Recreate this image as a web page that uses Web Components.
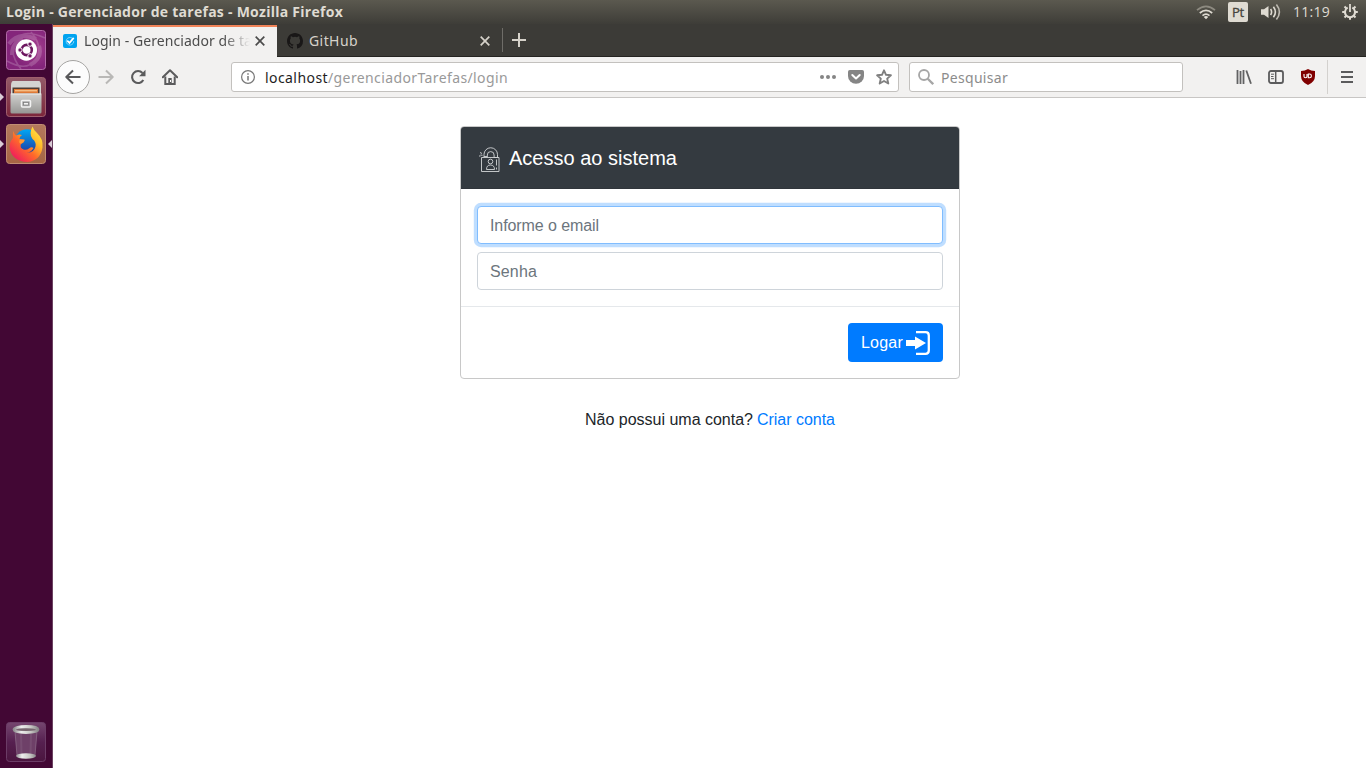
<!DOCTYPE html>
<html lang="pt-BR">
<head>
<meta charset="utf-8">
<title>Login - Gerenciador de tarefas</title>
<style>
html,body{margin:0;width:1366px;height:768px;overflow:hidden;background:#fff}
</style>
</head>
<body>
<desktop-shell></desktop-shell>
<script>
function define(name, html, setup) {
  const t = document.createElement('template');
  t.innerHTML = html;
  customElements.define(name, class extends HTMLElement {
    connectedCallback() {
      if (this.shadowRoot) return;
      this.attachShadow({mode: 'open'}).appendChild(t.content.cloneNode(true));
      if (setup) setup(this, this.shadowRoot);
    }
  });
}

/* Text label whose letter spacing is tuned to give a fixed advance width */
define('ui-label', `<style>:host{display:block;flex:none;white-space:nowrap}span{display:inline-block;white-space:pre}</style><span></span>`, (host, root) => {
  const s = root.querySelector('span');
  s.textContent = host.getAttribute('text');
  const w = +host.getAttribute('w');
  const fit = () => {
    s.style.letterSpacing = '0';
    const n = s.getBoundingClientRect().width;
    if (n) s.style.letterSpacing = ((w - n) / s.textContent.length) + 'px';
  };
  host.style.width = w + 'px';
  fit();
  requestAnimationFrame(fit);
});

const icons = {
wifi:['0 0 20 16','<g fill="none" stroke-width="1.7"><path d="M1 6.2Q10-1.6 19 6.2" stroke="#8d8a80"/><path d="M3.8 9Q10 3.6 16.2 9" stroke="#dfdbd2"/><path d="M6.5 11.6Q10 8.6 13.5 11.6" stroke="#dfdbd2"/></g><path d="M10 15.2l-2.2-2.3q2.2-1.6 4.4 0z" fill="#dfdbd2"/>'],
sound:['0 0 20 18','<path d="M0 6.3h3L7.5 3v12L3 11.7H0z" fill="#dfdbd2"/><g fill="none" stroke="#dfdbd2" stroke-width="1.6"><path d="M9.6 6q2 3 0 6"/><path d="M12.4 3.7q4 5.3 0 10.6"/><path d="M15.4 1.5q6 7.500 0 15" stroke="#bdb9b0"/></g>'],
power:['0 0 16 16','<g fill="none" stroke="#dfdbd2"><path d="M5.700 3.700a5 5 0 1 0 4.600 0" stroke-width="2"/><path d="M8 0v8" stroke-width="1.8"/><path d="M.2 8H3M13 8h2.800M8 13v2.800M2.500 2.500l2 2M13.500 2.500l-2 2M2.500 13.500l2-2M13.500 13.500l-2-2" stroke-width="2"/></g>'],
check:['0 0 14 14','<rect width="14" height="14" rx="2" fill="#00a4f0"/><path d="M10.700 7v1a3.800 3.800 0 1 1-1.500-3.800" fill="none" stroke="#7ed2fa" stroke-width="1"/><path d="M4.300 6.700l2.200 2.200 4.200-5" fill="none" stroke="#fff" stroke-width="1.700"/>'],
close:['0 0 10 10','<path d="M.7.7l8.600 8.600M9.300.7L.7 9.300" stroke="currentColor" stroke-width="1.700" fill="none"/>'],
plus:['0 0 14 14','<path d="M7 0v14M0 7h14" stroke="#d6d2ca" stroke-width="2"/>'],
github:['0 0 16 16','<path fill="#191717" d="M8 0C3.580 0 0 3.580 0 8c0 3.540 2.290 6.530 5.470 7.590.4.070.55-.17.55-.38 0-.19-.01-.82-.01-1.490-2.010.37-2.530-.49-2.690-.94-.09-.23-.48-.94-.82-1.130-.28-.15-.68-.52-.01-.53.63-.01 1.080.58 1.230.82.72 1.210 1.870.87 2.330.66.070-.52.28-.87.51-1.070-1.780-.2-3.640-.89-3.640-3.950 0-.87.31-1.590.82-2.150-.08-.2-.36-1.020.08-2.120 0 0 .67-.21 2.200.82a7.600 7.600 0 0 1 4 0c1.530-1.040 2.200-.82 2.200-.82.44 1.100.16 1.920.08 2.120.51.56.82 1.270.82 2.150 0 3.070-1.870 3.750-3.650 3.950.29.25.54.73.54 1.480 0 1.070-.01 1.930-.01 2.200 0 .21.15.46.55.38A8 8 0 0 0 16 8c0-4.420-3.580-8-8-8z"/>'],
back:['0 0 16 16','<path d="M15.500 8H1.500M8 1.500L1.300 8 8 14.500" fill="none" stroke="#58585a" stroke-width="2" stroke-linejoin="round"/>'],
fwd:['0 0 16 16','<path d="M.5 8h14M8 1.500L14.700 8 8 14.500" fill="none" stroke="#b9b8b6" stroke-width="2" stroke-linejoin="round"/>'],
reload:['0 0 16 16','<path d="M13.300 11A6 6 0 1 1 12.500 4" fill="none" stroke="#5b5b5c" stroke-width="2.100"/><path d="M15.500.8v6.400H9.100z" fill="#5b5b5c"/>'],
home:['0 0 16 16','<path d="M.8 8.300L8 1.200l7.200 7.100" fill="none" stroke="#5b5b5c" stroke-width="2" stroke-linejoin="round" stroke-linecap="round"/><path d="M3.300 7.500v7.500h9.400V7.500" fill="none" stroke="#5b5b5c" stroke-width="2"/><path d="M6.300 9h3.400v6H6.300z" fill="#5b5b5c"/><path d="M8 11h1v2H8z" fill="#fff"/>'],
info:['0 0 16 16','<circle cx="8" cy="8" r="6.400" fill="none" stroke="#777" stroke-width="1.200"/><path d="M8 7v4.500M8 4.200v1.600" stroke="#777" stroke-width="1.500"/>'],
dots:['0 0 16 16','<g fill="#858585"><circle cx="2" cy="8" r="2"/><circle cx="8" cy="8" r="2"/><circle cx="14" cy="8" r="2"/></g>'],
pocket:['0 0 16 16','<path d="M1.800 1h12.400Q16 1 16 2.800V7a8 7.800 0 0 1-16 0V2.800Q0 1 1.800 1z" fill="#858585"/><path d="M4.300 6L8 9.500 11.700 6" fill="none" stroke="#fff" stroke-width="2" stroke-linecap="round" stroke-linejoin="round"/>'],
star:['0 0 16 16','<path d="M8 1.300l2 4.500 4.900.5-3.700 3.300 1.100 4.900L8 12l-4.300 2.500 1.100-4.900L1.100 6.300 6 5.800z" fill="none" stroke="#808080" stroke-width="1.900" stroke-linejoin="round"/>'],
search:['0 0 16 16','<circle cx="6" cy="6" r="5" fill="none" stroke="#a6a6a6" stroke-width="1.800"/><path d="M9.700 9.700l5.500 5.500" stroke="#a6a6a6" stroke-width="2.300"/>'],
library:['0 0 16 16','<path d="M1.500 1v14M4.500 2v13M7.500 1v14M10.300 1.500l4.700 13.300" stroke="#626263" stroke-width="1.800"/>'],
sidebar:['0 0 16 14','<rect x="1" y="1" width="14" height="12" rx="2" fill="none" stroke="#5b5b5c" stroke-width="1.800"/><path d="M7.700 1v12" stroke="#5b5b5c" stroke-width="1.500"/><path d="M3 4.200h3M3 6.500h2.500M3 8.700h3" stroke="#5b5b5c" stroke-width="1"/>'],
shield:['0 0 16 16','<path d="M8 0q3 2 7 2v5q0 6-7 9-7-3-7-9V2q4 0 7-2z" fill="#800000"/><path d="M4 5v2.300q0 1.500 1.500 1.500T7 7.300V5M8.300 5h1.200a1.900 1.900 0 0 1 0 3.800H8.300z" fill="none" stroke="#fff" stroke-width="1.100"/>'],
menu:['0 0 12 12','<path d="M0 1h12M0 6h12M0 11h12" stroke="#5b5b5c" stroke-width="1.800"/>'],
ubuntu:['0 0 40 40','<defs><radialGradient id="a" cx=".7" cy=".45"><stop stop-color="#a64090"/><stop offset="1" stop-color="#84257b"/></radialGradient></defs><rect x=".5" y=".5" width="39" height="39" rx="3" fill="url(#a)" stroke="#b26aa7"/><g fill="none" stroke="#fff" opacity=".18" stroke-width="1.600"><path d="M1 31Q20 42 30 30Q38 17 25 2M39 8Q17-2 10 10Q2 23 15 39"/><path d="M3 14Q12 1 30 9M6 25Q6 12 17 9M33 16Q37 28 24 35" stroke-width="4"/></g><circle cx="20.300" cy="20" r="10.700" fill="#fff"/><circle cx="20.700" cy="20" r="5.100" fill="none" stroke="#6d1760" stroke-width="2.600"/><g fill="#6d1760" stroke="#fff" stroke-width="1"><circle cx="14" cy="20" r="2.200"/><circle cx="24" cy="14.100" r="2.200"/><circle cx="24" cy="25.900" r="2.200"/></g>'],
files:['0 0 40 40','<defs><linearGradient id="a" x2="0" y2="1"><stop stop-color="#d2d2d0"/><stop offset="1" stop-color="#969694"/></linearGradient><linearGradient id="b" x2="0" y2="1"><stop stop-color="#935a68"/><stop offset="1" stop-color="#7c263b"/></linearGradient></defs><rect x=".5" y=".5" width="39" height="39" rx="3" fill="url(#b)" stroke="#a0606e"/><path d="M7 4h26q1.500 0 2 4v9H5V8q.5-4 2-4z" fill="#d4d4d2"/><path d="M6.500 10.500h27v6.500h-27z" fill="#4d3c35"/><path d="M8 12h24v4.500H8z" fill="#df7a37"/><path d="M9 13.800h22" stroke="#ffd9a3" stroke-width="1"/><path d="M4.500 16.500h31V35q0 1.500-1.500 1.500H6q-1.500 0-1.500-1.500z" fill="url(#a)"/><path d="M5 17h30" stroke="#eee"/><rect x="15.500" y="23.500" width="9" height="6.500" rx="1" fill="#aaa" stroke="#f2f2f2" stroke-width="1.500"/><rect x="17.500" y="25.500" width="5" height="2.500" fill="#f4f4f4" stroke="#777" stroke-width=".7"/>'],
firefox:['0 0 40 40','<defs><linearGradient id="a" x1=".95" y1="0" x2=".15" y2=".9"><stop stop-color="#fff04b"/><stop offset=".35" stop-color="#ffbd2b"/><stop offset=".62" stop-color="#ff6a2a"/><stop offset="1" stop-color="#f01d5c"/></linearGradient><linearGradient id="b" x2="0" y2="1"><stop stop-color="#00a8f5"/><stop offset="1" stop-color="#2037a0"/></linearGradient><linearGradient id="c" x2="0" y2="1"><stop stop-color="#b3785d"/><stop offset="1" stop-color="#a66544"/></linearGradient></defs><rect x=".5" y=".5" width="39" height="39" rx="3" fill="url(#c)" stroke="#c18d73"/><circle cx="21" cy="17.500" r="12.300" fill="url(#b)"/><path d="M7.500 7q.5 3 2.500 4.500 3-1.500 6-.5-2.500 1.500-2.500 4l5 .5q.5 2.500-3.500 4.500-1.500 4 2.500 5.500 3 1 5.500-1t4.500-.5q-2.500 4.500-7 4.500 7.500.5 9-6 1-4.500-3-7.500-4-5 0-12.500 1 3.500 4.500 6.500 6.500 6 5.500 14.500-2 13-15 14.500Q7.500 37.500 4 26q-1.500-7 3-12-.5-4 .5-7z" fill="url(#a)"/><path d="M14 15.500l4.500.5q0 2-3.500 3.800-3-1-1-4.300z" fill="#ff9a37"/>'],
trash:['0 0 40 40','<defs><linearGradient id="a"><stop stop-color="#918f91"/><stop offset=".3" stop-color="#eee"/><stop offset=".7" stop-color="#c7c7c4"/><stop offset="1" stop-color="#8a878a"/></linearGradient><linearGradient id="b" x2="0" y2="1"><stop stop-color="#75466f"/><stop offset=".5" stop-color="#562050"/><stop offset="1" stop-color="#4b153f"/></linearGradient></defs><rect x=".5" y=".5" width="39" height="39" rx="3" fill="url(#b)" stroke="#6b3c66"/><path d="M8.500 9l2.500 25h18l2.500-25z" fill="#6e4068"/><path d="M9 9l2 25M31 9l-2 25" stroke="#9b8198" stroke-width=".8" opacity=".6"/><path d="M15 12l.5 21M25 12l-.5 21" stroke="#8e6c89" stroke-width="2" opacity=".3"/><ellipse cx="20" cy="34" rx="10" ry="2.700" fill="url(#a)"/><ellipse cx="20" cy="7.500" rx="12" ry="3" fill="#a39a9f" stroke="url(#a)" stroke-width="2.800"/><ellipse cx="20" cy="7.700" rx="10" ry="1.300" fill="#77656f"/>'],
lock:['0 0 22 26','<g fill="none" stroke="#d3d5d7" stroke-width=".9"><path d="M5 10V7.500a6.500 6.500 0 0 1 13.500 0V10.500M8.300 10V8a3.300 3.300 0 0 1 6.800 0v2.500M5 9.500h3.300M15.100 10.500h3.400"/><path d="M2.500 10.500h17.500v14h-17.500z"/><circle cx="11.500" cy="14.500" r="2.300"/><path d="M7.500 22.500q0-4.500 4-4.500t4 4.500zM17.500 12.500v6M17.500 20.500v2M0 9h1.500M1 5.500l2 1M1.500 8l2 .3"/></g>'],
enter:['0 0 24 24','<path d="M10 1.200h9.500q3.300 0 3.300 3.300v15q0 3.300-3.300 3.300H10" fill="none" stroke="#fff" stroke-width="2.300"/><path d="M0 9h9V5.500L20 12 9 18.500V15H0z" fill="#fff"/>']
};
define('ui-icon', `<style>:host{display:block;flex:none}svg{display:block;width:100%;height:100%}</style><svg></svg>`, (host, root) => {
  const [vb, body] = icons[host.getAttribute('name')];
  const svg = root.querySelector('svg');
  svg.setAttribute('viewBox', vb);
  svg.innerHTML = body;
  host.style.width = host.getAttribute('w') + 'px';
  host.style.height = (host.getAttribute('h') || host.getAttribute('w')) + 'px';
});

define('top-panel', `<style>
:host{display:flex;box-sizing:border-box;height:24px;padding:0 8px 0 6px;align-items:center;background:linear-gradient(#5b594f,#3e3d38);color:#dfdbd2;font:14px/24px "Open Sans","Noto Sans",sans-serif}
.t{font-weight:700;margin-right:auto}
.pt{width:20px;height:20px;border-radius:2px;background:#dfdbd2;color:#45433d;display:flex;align-items:center;justify-content:center;font-size:13px;line-height:20px;margin:0 13px 0 12px;-webkit-text-stroke:.3px #45433d}
.clock{margin:0 12px}
</style><ui-label class="t" text="Login - Gerenciador de tarefas - Mozilla Firefox" w="337"></ui-label>
<ui-icon name="wifi" w="20" h="16"></ui-icon><div class="pt"><ui-label text="Pt" w="12"></ui-label></div><ui-icon name="sound" w="20" h="18"></ui-icon><ui-label class="clock" text="11:19" w="37"></ui-label><ui-icon name="power" w="16"></ui-icon>`);

define('launcher-item', `<style>:host{display:flex;align-items:center;justify-content:space-between;height:40px;width:52px}
i{width:4px;height:8px;margin-right:2px;background:#d9ccd6;visibility:hidden}.r{margin:0 0 0 2px}.l{clip-path:polygon(0 0,100% 50%,0 100%)}.r{clip-path:polygon(100% 0,0 50%,100% 100%)}
:host([open]) .l,:host([active]) .r{visibility:visible}</style><i class="l"></i><slot></slot><i class="r"></i>`);
define('app-launcher', `<style>:host{display:flex;flex-direction:column;gap:7px;box-sizing:border-box;width:53px;padding:6px 0;background:#420734;border-right:1px solid #6b4261}
.last{margin-top:auto}</style>
<launcher-item><ui-icon name="ubuntu" w="40"></ui-icon></launcher-item>
<launcher-item open><ui-icon name="files" w="40"></ui-icon></launcher-item>
<launcher-item open active><ui-icon name="firefox" w="40"></ui-icon></launcher-item>
<launcher-item class="last"><ui-icon name="trash" w="40"></ui-icon></launcher-item>`);

define('browser-tab', `<style>:host{display:flex;box-sizing:border-box;align-items:center;width:225px;height:33px;padding:1px 12px 0 10px;color:#d6d2ca;border-bottom:1px solid #252421}
:host([active]){width:224px;background:linear-gradient(#3c3b37 1px,#f08358 1px,#f08358 3px,#f2f1f0 3px);color:#4c4c4c;border-bottom:0;padding:0 12px 0 10px}
div{flex:1;overflow:hidden;margin:0 4px 0 6px}:host([active]) div{margin:0 5px 0 7px;-webkit-mask:linear-gradient(90deg,#000 84%,transparent 100%);mask:linear-gradient(90deg,#000 84%,transparent 100%)}</style>
<slot name="icon"></slot><div><slot></slot></div><ui-icon name="close" w="10"></ui-icon>`);
define('tab-strip', `<style>:host{display:flex;height:33px;box-sizing:border-box;background:#3c3b37;font:14px/24px "Noto Sans","Open Sans",sans-serif;padding-top:0}
.new{flex:1;border-bottom:1px solid #252421;display:flex;align-items:center;padding-left:9px}.new:before{content:"";height:24px;width:1px;background:#6f6d68;margin:0 9px 0 -9px}
</style><browser-tab active><ui-icon slot="icon" name="check" w="14"></ui-icon><ui-label text="Login - Gerenciador de tarefas" w="201"></ui-label></browser-tab>
<browser-tab><ui-icon slot="icon" name="github" w="16"></ui-icon><ui-label text="GitHub" w="49"></ui-label></browser-tab><div class="new"><ui-icon name="plus" w="14"></ui-icon></div>`);

define('nav-bar', `<style>:host{display:flex;align-items:center;box-sizing:border-box;height:41px;background:#f2f1f0;border-bottom:1px solid #c8c6c4;padding:0 13px 0 3px;font:14px/24px "Noto Sans","Open Sans",sans-serif}
.back{width:34px;height:34px;box-sizing:border-box;border:1px solid #a5a4a2;border-radius:50%;background:#fcfcfc;display:flex;align-items:center;justify-content:center;margin-right:8px}
.nav{display:flex;gap:16px}
.f{height:30px;box-sizing:border-box;background:#fff;border:1px solid #c3c1be;border-radius:3px;display:flex;align-items:center}
.f ui-label{padding-top:2px}
.url{width:668px;margin-left:53px;padding:0 6px 0 8px}.url .h{margin-left:9px;color:#1e1e1e}.p{color:#999;margin-right:auto}
.acts{display:flex;gap:12px}.q{width:274px;margin-left:10px;padding-left:8px;color:#8c8c8c}.q ui-label{margin-left:7px}
.tools{display:flex;gap:16px;margin-left:auto;align-items:center}.sep{width:1px;height:34px;background:#d3d1ce;margin:0 13px 0 11px}</style>
<div class="back"><ui-icon name="back" w="16"></ui-icon></div><div class="nav"><ui-icon name="fwd" w="16"></ui-icon><ui-icon name="reload" w="16"></ui-icon><ui-icon name="home" w="16"></ui-icon></div>
<div class="f url"><ui-icon name="info" w="16"></ui-icon><ui-label class="h" text="localhost" w="63"></ui-label><ui-label class="p" text="/gerenciadorTarefas/login" w="180"></ui-label><div class="acts"><ui-icon name="dots" w="16"></ui-icon><ui-icon name="pocket" w="16"></ui-icon><ui-icon name="star" w="16"></ui-icon></div></div>
<div class="f q"><ui-icon name="search" w="16"></ui-icon><ui-label text="Pesquisar" w="67"></ui-label></div>
<div class="tools"><ui-icon name="library" w="16"></ui-icon><ui-icon name="sidebar" w="16" h="14"></ui-icon><ui-icon name="shield" w="16"></ui-icon></div><span class="sep"></span><ui-icon name="menu" w="12"></ui-icon>`);

define('form-field', `<style>:host{display:block;box-sizing:border-box;height:38px;border:1px solid #ced4da;border-radius:4px;padding:7px 12px 5px;color:#6c757d;background:#fff}
:host([focused]){border-color:#80bdff;box-shadow:0 0 0 3.200px rgba(0,123,255,.25)}</style><slot></slot>`);
define('login-card', `<style>:host{display:block;box-sizing:border-box;width:500px;border:1px solid #c8c8c8;border-radius:4px;background:#fff;overflow:hidden}
header{height:62px;box-sizing:border-box;background:#343a40;border-bottom:1px solid #30353b;color:#fff;display:flex;align-items:center;padding:4px 0 0 18px;gap:8px;font-size:20px;line-height:24px}
header ui-label{margin-top:-4px}
section{padding:17px 16px 16px;display:grid;gap:8px}
footer{border-top:1px solid #e5e8eb;padding:16px;display:flex;justify-content:flex-end}
button{all:unset;box-sizing:border-box;width:95px;height:39px;border-radius:4px;background:#007bff;color:#fff;display:flex;align-items:center;padding:0 13px;gap:3px;font:inherit}</style>
<header><ui-icon name="lock" w="22" h="26"></ui-icon><ui-label text="Acesso ao sistema" w="168"></ui-label></header>
<section><form-field focused><ui-label text="Informe o email" w="109"></ui-label></form-field><form-field><ui-label text="Senha" w="47"></ui-label></form-field></section>
<footer><button><ui-label text="Logar" w="42"></ui-label><ui-icon name="enter" w="24"></ui-icon></button></footer>`);
define('login-page', `<style>:host{display:flex;flex:1;flex-direction:column;align-items:center;padding:28px 0 0 1px;background:#fff;color:#212529;font:16px/24px "Liberation Sans",Arial,sans-serif}
p{margin:29px 0 0;display:flex;gap:4px}a{color:#007bff;text-decoration:none}</style><login-card></login-card><p><ui-label text="Não possui uma conta?" w="168"></ui-label><a><ui-label text="Criar conta" w="78"></ui-label></a></p>`);
define('browser-window', `<style>:host{display:flex;flex:1;min-width:0;flex-direction:column}</style><tab-strip></tab-strip><nav-bar></nav-bar><login-page></login-page>`);
define('desktop-shell', `<style>:host{display:flex;flex-direction:column;width:1366px;height:768px;overflow:hidden}main{display:flex;flex:1;min-height:0}</style><top-panel></top-panel><main><app-launcher></app-launcher><browser-window></browser-window></main>`);
</script>
</body>
</html>
